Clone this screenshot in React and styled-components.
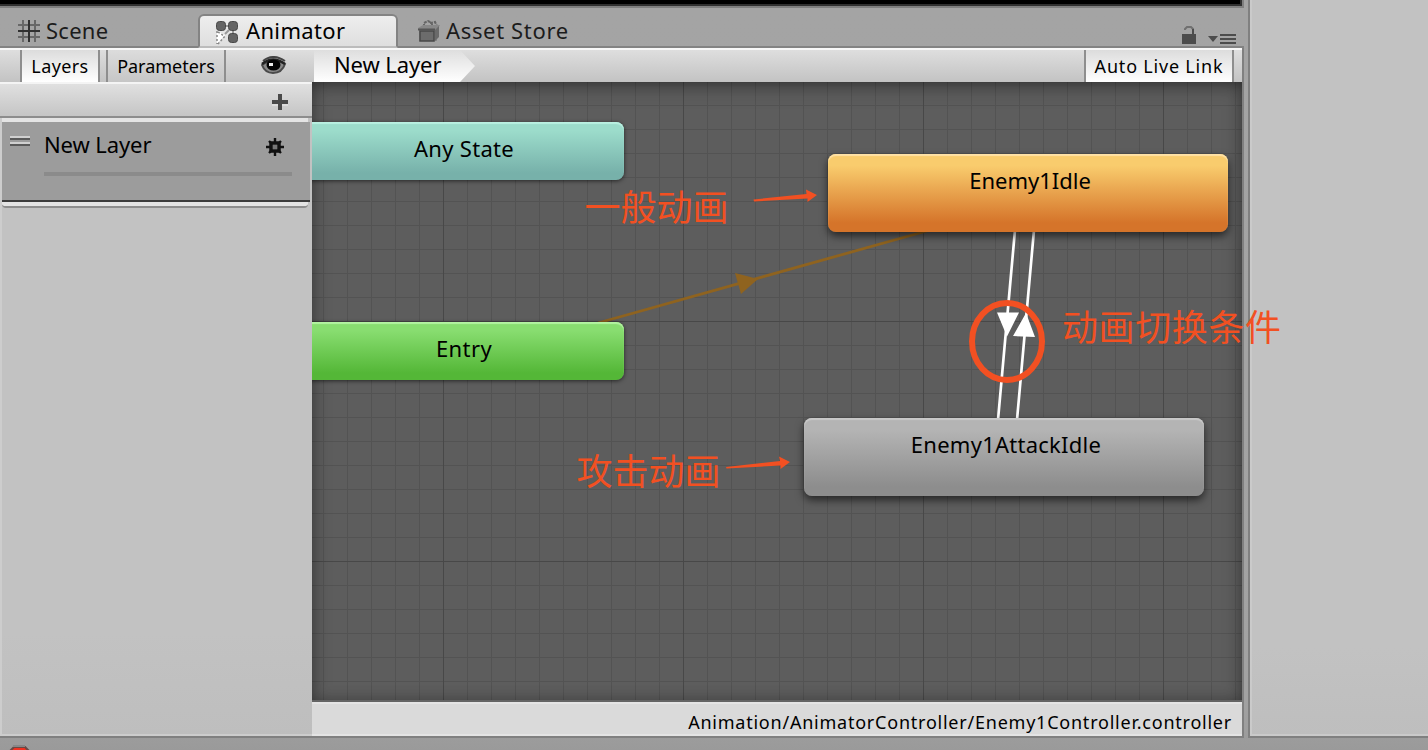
import React from 'react';
import styled, { createGlobalStyle } from 'styled-components';

const GlobalStyle = createGlobalStyle`
  * { box-sizing: border-box; }
  body { margin: 0; background: #a2a2a2; overflow: hidden; }
`;

const Screen = styled.div`
  width: 1428px;
  height: 750px;
  overflow: hidden;
  display: flex;
  flex-direction: column;
  background: linear-gradient(#a4a4a4 8px, #a2a2a2 700px, #9a9a9a);
  font-family: 'Noto Sans', 'Open Sans', sans-serif;
  color: #000;
`;

const Workspace = styled.div`
  display: flex;
  gap: 4px;
  height: 738px;
`;

const Dock = styled.section`
  width: 1244px;
  border-bottom: 2px solid #808080;
  display: flex;
  flex-direction: column;
`;

const SidePane = styled.aside`
  flex: 1;
  border-left: 2px solid #808080;
  border-bottom: 2px solid #808080;
  background: linear-gradient(#c2c2c2 88%, #bebebe);
  box-shadow: inset 2px -2px 0 #cacaca;
`;

const GamePreviewEdge = styled.div`
  height: 8px;
  width: 1244px;
  background: #000;
  border: solid #808080;
  border-width: 0 2px 2px 0;
  box-shadow: inset -2px -2px 0 #303030;
`;

const TabBar = styled.div`
  height: 40px;
  width: 1244px;
  display: flex;
  align-items: flex-end;
  border-bottom: 2px solid #838383;
`;

const Tab = styled.div`
  width: ${p => p.$width}px;
  height: ${p => (p.$active ? 34 : 32)}px;
  margin-bottom: ${p => (p.$active ? -2 : 0)}px;
  padding-left: ${p => p.$pad}px;
  padding-bottom: ${p => (p.$active ? 3 : 0)}px;
  display: flex;
  align-items: center;
  gap: ${p => p.$gap}px;
  border: ${p => (p.$active ? '2px solid #838383' : '0')};
  border-bottom: ${p => (p.$active ? '2px solid #bcbcbc' : '0')};
  border-radius: 6px 6px 0 0;
  background: ${p => (p.$active ? 'linear-gradient(#eee, #dfdfdf)' : 'none')};
  color: ${p => (p.$active ? '#000' : '#1c1c1c')};

  svg { position: relative; top: ${p => (p.$active ? 3 : 1)}px; }
`;

const Label = styled.span`
  font-size: ${p => p.$size}px;
  letter-spacing: ${p => p.$track || 0}px;
  line-height: 26px;
  white-space: nowrap;
`;

const TabTools = styled.div`
  margin-left: auto;
  display: flex;
  align-items: flex-end;
  gap: 12px;
  padding: 0 8px 2px 0;
`;

const AnimatorWindow = styled.div`
  flex: 1;
  width: 1244px;
  display: flex;
  border-right: 2px solid #808080;
`;

const LayersColumn = styled.div`
  width: 312px;
  display: flex;
  flex-direction: column;
  background: linear-gradient(#c2c2c2 85%, #bebebe);
  box-shadow: inset 2px -2px 0 #cdcdcd;
`;

const Toolbar = styled.div`
  height: 34px;
  display: flex;
  align-items: stretch;
  border-top: 2px solid #f8f8f8;
  background: linear-gradient(#dedede, #c3c3c3);
`;

const ToolbarButton = styled.div`
  width: ${p => p.$width}px;
  margin-left: ${p => p.$offset}px;
  display: flex;
  align-items: center;
  justify-content: center;
  border: solid #8e8e8e;
  border-width: 0 2px;
  background: ${p => (p.$on ? 'linear-gradient(#dcdcdc, #fff)' : 'linear-gradient(#dcdcdc, #c6c6c6)')};
`;

const EyeSlot = styled.div`
  margin-left: 35px;
  padding-top: 6px;
`;

const AddBar = styled.div`
  height: 36px;
  display: flex;
  align-items: center;
  justify-content: flex-end;
  padding: 4px 24px 0 0;
  border-top: 2px solid #f4f4f4;
  border-bottom: 2px solid #8d8d8d;
  background: linear-gradient(#e0e0e0, #c5c5c5);
`;

const LayerCard = styled.div`
  height: 90px;
  width: 306px;
  margin-left: 2px;
  border: solid #8d8d8d;
  border-width: 0 0 2px 0;
  border-radius: 0 0 4px 4px;
  background: #e4e4e4;
  padding: 4px 0;
`;

const LayerItem = styled.div`
  height: 80px;
  width: 308px;
  background: #9c9c9c;
  border-bottom: 2px solid #3c3c3c;
  padding: 10px 20px 0 8px;
`;

const LayerHead = styled.div`
  display: flex;
  align-items: center;
  height: 26px;
`;

const DragHandle = styled.div`
  width: 20px;
  height: 10px;
  margin: -8px 14px 0 0;
  background: linear-gradient(
    #d0d0d0 0 2px, #5a5a5a 2px 4px, #9c9c9c 4px 6px, #d0d0d0 6px 8px, #5a5a5a 8px 10px
  );
`;

const LayerName = styled.div`
  height: 28px;
`;

const GearSlot = styled.div`
  margin: 6px 6px 0 auto;
  height: 20px;
`;

const WeightBar = styled.div`
  height: 4px;
  margin: 14px -2px 0 34px;
  background: #8b8b8b;
`;

const GraphColumn = styled.div`
  width: 930px;
  display: flex;
  flex-direction: column;
`;

const Crumb = styled.div`
  width: 162px;
  margin-left: 2px;
  padding: 1px 0 0 20px;
  clip-path: polygon(0 0, 146px 0, 161px 16px, 146px 100%, 0 100%);
  background: linear-gradient(#dedede, #fff);
`;

const Graph = styled.div`
  position: relative;
  height: 620px;
  overflow: hidden;
  border-bottom: 2px solid #646464;
  background-color: #5d5d5d;
  background-image:
    linear-gradient(90deg, #484848 1px, transparent 1px),
    linear-gradient(#484848 1px, transparent 1px),
    linear-gradient(90deg, #535353 1px, transparent 1px),
    linear-gradient(#535353 1px, transparent 1px);
  background-size: 240px 240px, 240px 240px, 24px 24px, 24px 24px;
  background-position: 131px -1px, 131px -1px, 11px -1px, 11px -1px;
`;

const Vignette = styled.div`
  position: absolute;
  inset: 0;
  box-shadow: inset 0 6px 24px -8px rgba(0, 0, 0, 0.55), inset 0 0 14px rgba(0, 0, 0, 0.22);
`;

const Wires = styled.svg`
  position: absolute;
  left: 0;
  top: 0;
`;

const palette = {
  teal: ['#9cdccb', '#77b1aa', '#baf0e1'],
  green: ['#88dd70', '#54b737', '#b3f3a1'],
  orange: ['#f9cc6d', '#d5742a', '#ffe2a6'],
  gray: ['#b4b4b4', '#8d8d8d', '#c9c9c9'],
};

const StateNode = styled.div`
  position: absolute;
  left: ${p => p.$x}px;
  top: ${p => p.$y}px;
  width: ${p => p.$w}px;
  height: ${p => p.$h}px;
  padding: 13px 0 0 ${p => (p.$h > 60 ? 4 : 0)}px;
  text-align: center;
  border-radius: 8px;
  background: linear-gradient(${p => palette[p.$tone][0]} 15%, ${p => palette[p.$tone][1]} 88%);
  box-shadow: inset 0 2px 1px ${p => palette[p.$tone][2]}, 0 ${p => (p.$h > 60 ? '4px 8px' : '1px 4px')} rgba(0, 0, 0, 0.6);
`;

const StatusBar = styled.div`
  height: 34px;
  display: flex;
  align-items: center;
  justify-content: flex-end;
  padding: 6px 10px 0 0;
  background: #dadada;
  box-shadow: inset 0 2px #e4e4e4, inset 0 -2px #e4e4e4;
`;

const ConsoleBar = styled.footer`
  height: 12px;
  padding: 6px 0 0 9px;
  overflow: hidden;
`;

const Markup = styled.svg`
  position: absolute;
  left: 0;
  top: 0;
  pointer-events: none;
`;

const Note = styled.div`
  position: absolute;
  left: ${p => p.$x}px;
  top: ${p => p.$y}px;
  font: 400 36px/44px 'Noto Sans CJK SC', sans-serif;
  letter-spacing: ${p => p.$track || 0}px;
  white-space: nowrap;
  color: #f25022;
`;

const SceneIcon = () => (
  <svg width="22" height="22" viewBox="0 0 22 22" fill="none" strokeWidth="2">
    <path d="M5 0v22M17 0v22M0 5h22M0 17h22" stroke="#686868" />
    <path d="M11 0v22M0 11h22" stroke="#303030" />
  </svg>
);

const AnimatorIcon = () => (
  <svg width="22" height="24" viewBox="0 0 22 24">
    <path d="M9 5h4M17 10v3M9 13l4-4" stroke="#999" strokeWidth="2" />
    <g fill="#646464" stroke="#484848">
      <rect x=".5" y=".5" width="9" height="9" rx="3" />
      <rect x="12.5" y=".5" width="9" height="9" rx="3" />
      <rect x="12.5" y="12.5" width="9" height="9" rx="3" />
    </g>
    <path d="M1 10v13l8-9z" fill="#fff" />
    <path d="M1 10v13M2 23l8-9M2 11l6 4" stroke="#888" strokeWidth="1.5" strokeDasharray="2 2" />
  </svg>
);

const StoreIcon = () => (
  <svg width="22" height="22" viewBox="0 0 22 22">
    <path d="M6 7V3l4-2 4 2v4M12 3l5-1 2 4" fill="none" stroke="#666" strokeWidth="2" strokeDasharray="3 1" />
    <path d="M0 8l5-3h17l-3 5v11H1V10z" fill="#888" />
    <path d="M2 11h14v10H2z" fill="#6c6c6c" stroke="#484848" strokeWidth="1.5" />
    <path d="M17 10l4-4v11l-4 4z" fill="#6a6a6a" />
    <path d="M0 9.500h17" stroke="#555" strokeWidth="2" />
  </svg>
);

const LockIcon = () => (
  <svg width="14" height="18" viewBox="0 0 14 18">
    <path d="M3 4V3l2-2h4l2 2v6" fill="none" stroke="#707070" strokeWidth="2" />
    <path d="M11 3v6" stroke="#4c4c4c" strokeWidth="2" />
    <path d="M0 8h14v10H0z" fill="#4c4c4c" />
  </svg>
);

const MenuIcon = () => (
  <svg width="28" height="10" viewBox="0 0 28 10">
    <path d="M0 2h10L5 8z" fill="#4c4c4c" />
    <path d="M12 1h16M12 5h16M12 9h16" stroke="#4c4c4c" strokeWidth="2" />
  </svg>
);

const EyeIcon = () => (
  <svg width="26" height="20" viewBox="0 0 26 20">
    <path d="M2 5Q12-3 24 5" fill="none" stroke="#444" strokeWidth="2" />
    <path d="M1 9Q12 1 24 8Q21 17 12 17Q4 17 1 9z" fill="#8a8a8a" stroke="#4a4a4a" strokeWidth="2" />
    <path d="M1 8Q12-1 24 8" fill="none" stroke="#222" strokeWidth="2.5" />
    <ellipse cx="12.500" cy="9" rx="7" ry="5.500" fill="#050505" />
    <rect x="8" y="7" width="4" height="3" fill="#eee" />
  </svg>
);

const PlusIcon = () => (
  <svg width="16" height="17" viewBox="0 0 16 17">
    <path d="M0 11h6M10 11h6" stroke="#ddd" strokeWidth="2" />
    <path d="M8 0v16M0 8h16" stroke="#4a4a4a" strokeWidth="4" />
  </svg>
);

const GearIcon = () => (
  <svg width="18" height="18" viewBox="0 0 18 18" fill="none" stroke="#111">
    <path d="M9 0v4M9 14v4M0 9h4M14 9h4M3 3l3 3M12 12l3 3M15 3l-3 3M6 12l-3 3" strokeWidth="2.4" />
    <rect x="5" y="5" width="8" height="8" strokeWidth="3.5" />
    <rect x="7" y="7" width="4" height="4" fill="#777" stroke="none" />
  </svg>
);

const ErrorIcon = () => (
  <svg width="22" height="16" viewBox="0 0 22 16">
    <path d="M1 6l4-4h11l4 4v12H1z" fill="#f03222" stroke="#6a4a46" strokeWidth="2" />
    <path d="M4 1h12" stroke="#888" strokeWidth="2" />
  </svg>
);

function LayersPanel() {
  return (
    <LayersColumn>
      <Toolbar>
        <ToolbarButton $width={80} $offset={20} $on><Label $size={18} $track={0.4}>Layers</Label></ToolbarButton>
        <ToolbarButton $width={120} $offset={6}><Label $size={18} $track={-0.02}>Parameters</Label></ToolbarButton>
        <EyeSlot><EyeIcon /></EyeSlot>
      </Toolbar>
      <AddBar><PlusIcon /></AddBar>
      <LayerCard>
        <LayerItem>
          <LayerHead>
            <DragHandle />
            <LayerName><Label $size={22} $track={-0.1}>New Layer</Label></LayerName>
            <GearSlot><GearIcon /></GearSlot>
          </LayerHead>
          <WeightBar />
        </LayerItem>
      </LayerCard>
    </LayersColumn>
  );
}

function StateGraph() {
  return (
    <Graph>
      <Vignette />
      <Wires width="930" height="618" viewBox="312 82 930 618">
        <path d="M598 323L930 230" stroke="#8f631f" strokeWidth="2.8" />
        <path d="M735 273l23 6-17 15z" fill="#8f631f" />
        <path d="M1015 230L998 420M1034 230L1017 420" stroke="#fff" strokeWidth="2.7" />
        <path d="M997 312.500h22l-12 24zM1013 336l13-23 9 24z" fill="#fff" />
      </Wires>
      <StateNode $x={-8} $y={40} $w={320} $h={58} $tone="teal"><Label $size={22} $track={0.3}>Any State</Label></StateNode>
      <StateNode $x={-8} $y={240} $w={320} $h={58} $tone="green"><Label $size={22} $track={0.4}>Entry</Label></StateNode>
      <StateNode $x={516} $y={72} $w={400} $h={78} $tone="orange"><Label $size={22}>Enemy1Idle</Label></StateNode>
      <StateNode $x={492} $y={336} $w={400} $h={78} $tone="gray"><Label $size={22} $track={0.25}>Enemy1AttackIdle</Label></StateNode>
    </Graph>
  );
}

function Annotations() {
  return (
    <>
      <Markup width="1428" height="750" fill="#f25022">
        <path d="M753.500 199.500l53-5.500-.5-4.500 11 5.500-9.500 7v-3.500l-53.500 3z" />
        <path d="M726 467l54-6-1-4.500 11 5.500-9.500 7v-3.500l-54 3z" />
        <ellipse cx="1007" cy="341.500" rx="35" ry="38.500" fill="none" stroke="#f25022" strokeWidth="6" />
      </Markup>
      <Note $x={584.5} $y={183}>一般动画</Note>
      <Note $x={576.5} $y={447}>攻击动画</Note>
      <Note $x={1062} $y={303} $track={0.6}>动画切换条件</Note>
    </>
  );
}

export default function App() {
  return (
    <Screen>
      <GlobalStyle />
      <Workspace>
        <Dock>
          <GamePreviewEdge />
          <TabBar>
            <Tab $width={198} $pad={18} $gap={6}><SceneIcon /><Label $size={22} $track={0.25}>Scene</Label></Tab>
            <Tab $active $width={200} $pad={16} $gap={8}><AnimatorIcon /><Label $size={22} $track={0.35}>Animator</Label></Tab>
            <Tab $width={200} $pad={20} $gap={6}><StoreIcon /><Label $size={22} $track={0.65}>Asset Store</Label></Tab>
            <TabTools><LockIcon /><MenuIcon /></TabTools>
          </TabBar>
          <AnimatorWindow>
            <LayersPanel />
            <GraphColumn>
              <Toolbar>
                <Crumb><Label $size={22} $track={-0.1}>New Layer</Label></Crumb>
                <ToolbarButton $width={150} $offset={608} $on><Label $size={18} $track={0.8}>Auto Live Link</Label></ToolbarButton>
              </Toolbar>
              <StateGraph />
              <StatusBar><Label $size={18} $track={0.77}>Animation/AnimatorController/Enemy1Controller.controller</Label></StatusBar>
            </GraphColumn>
          </AnimatorWindow>
        </Dock>
        <SidePane />
      </Workspace>
      <ConsoleBar><ErrorIcon /></ConsoleBar>
      <Annotations />
    </Screen>
  );
}
